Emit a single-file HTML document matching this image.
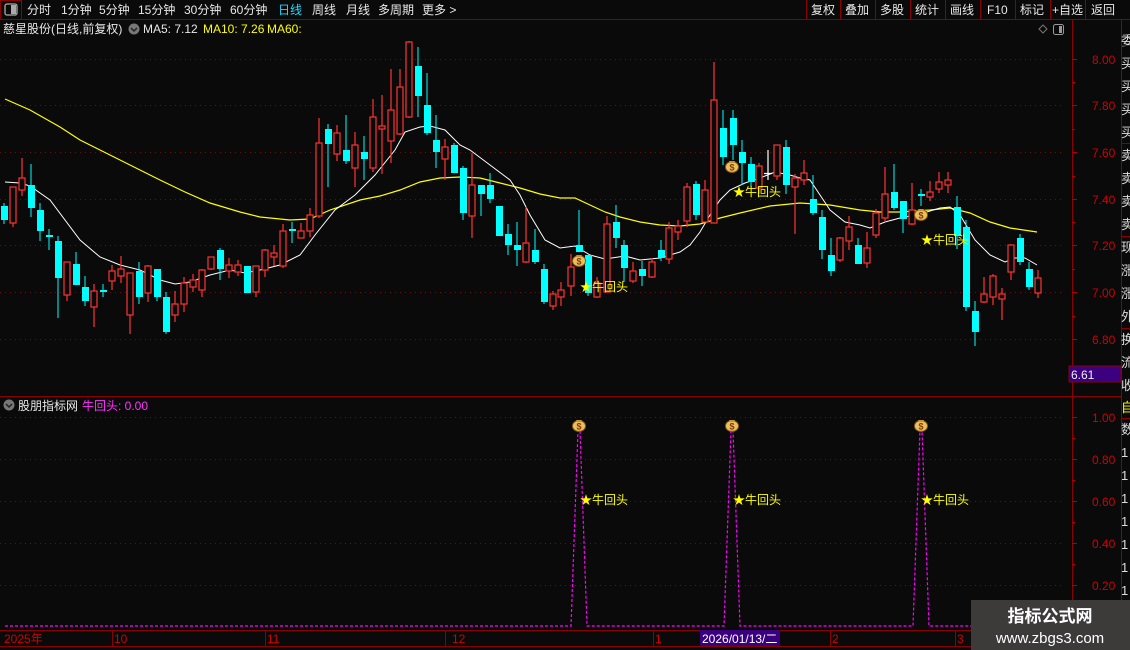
<!DOCTYPE html>
<html><head><meta charset="utf-8"><style>
html,body{margin:0;padding:0;background:#0a0a0a;width:1130px;height:650px;overflow:hidden}
svg{display:block;font-family:"Liberation Sans","Noto Sans CJK SC",sans-serif}
</style></head><body>
<svg width="1130" height="650" viewBox="0 0 1130 650" xmlns="http://www.w3.org/2000/svg">
<rect width="1130" height="650" fill="#0a0a0a"/>
<!-- toolbar -->
<g font-size="12" fill="#e8e8e8">
<rect x="0.5" y="0.5" width="21" height="19" fill="none" stroke="#8b0000"/>
<rect x="5" y="4" width="12" height="11" rx="2" fill="none" stroke="#aaa" stroke-width="1.3"/><rect x="11" y="5" width="5" height="9" fill="#aaa"/>
<text x="27" y="14">分时</text><text x="61" y="14">1分钟</text><text x="99" y="14">5分钟</text><text x="138" y="14">15分钟</text><text x="184" y="14">30分钟</text><text x="230" y="14">60分钟</text>
<text x="278" y="14" fill="#22d8ff">日线</text><text x="312" y="14">周线</text><text x="346" y="14">月线</text><text x="378" y="14">多周期</text><text x="422" y="14">更多 &gt;</text>
<line x1="0" y1="19.5" x2="1130" y2="19.5" stroke="#8b0000"/>
<g stroke="#8b0000"><line x1="806.5" y1="0" x2="806.5" y2="19"/><line x1="840.5" y1="0" x2="840.5" y2="19"/><line x1="875.5" y1="0" x2="875.5" y2="19"/><line x1="910.5" y1="0" x2="910.5" y2="19"/><line x1="945.5" y1="0" x2="945.5" y2="19"/><line x1="980.5" y1="0" x2="980.5" y2="19"/><line x1="1015.5" y1="0" x2="1015.5" y2="19"/><line x1="1050.5" y1="0" x2="1050.5" y2="19"/><line x1="1085.5" y1="0" x2="1085.5" y2="19"/></g>
<text x="811" y="14">复权</text><text x="845" y="14">叠加</text><text x="880" y="14">多股</text><text x="915" y="14">统计</text><text x="950" y="14">画线</text><text x="987" y="14">F10</text><text x="1020" y="14">标记</text><text x="1052" y="14">+自选</text><text x="1091" y="14">返回</text>
</g>
<!-- legend -->
<g font-size="12">
<text x="3" y="33" fill="#e8e8e8">慈星股份(日线,前复权)</text>
<circle cx="134" cy="29" r="5.5" fill="#777"/><path d="M131 28l3 3 3-3" stroke="#222" stroke-width="1.5" fill="none"/>
<text x="143" y="33" fill="#e8e8e8">MA5: 7.12</text>
<text x="203" y="33" fill="#ffff00">MA10: 7.26</text>
<text x="267" y="33" fill="#ffff00">MA60:</text>
<path d="M1043 25l4 4-4 4-4-4z" fill="none" stroke="#777"/>
<rect x="1053.5" y="24.5" width="10" height="10" rx="2" fill="none" stroke="#999"/><rect x="1059" y="26" width="3" height="7" fill="#999"/>
</g>
<!-- axes frame -->
<g stroke="#8b0000">
<line x1="1072.5" y1="20" x2="1072.5" y2="630"/>
<line x1="1121.5" y1="20" x2="1121.5" y2="650"/>
<line x1="0" y1="396.5" x2="1121" y2="396.5"/>
<line x1="0" y1="630.5" x2="1121" y2="630.5"/>
<line x1="0" y1="646.5" x2="1121" y2="646.5"/>
</g>
<!-- grid -->
<g stroke="#6a1010" stroke-dasharray="1 4">
<line x1="0" y1="59.5" x2="1063" y2="59.5"/><line x1="0" y1="105.5" x2="1063" y2="105.5"/><line x1="0" y1="152.5" x2="1063" y2="152.5"/><line x1="0" y1="199.5" x2="1063" y2="199.5"/><line x1="0" y1="245.5" x2="1063" y2="245.5"/><line x1="0" y1="292.5" x2="1063" y2="292.5"/><line x1="0" y1="339.5" x2="1063" y2="339.5"/>
<line x1="0" y1="417.5" x2="1063" y2="417.5"/><line x1="0" y1="459.5" x2="1063" y2="459.5"/><line x1="0" y1="501.5" x2="1063" y2="501.5"/><line x1="0" y1="543.5" x2="1063" y2="543.5"/><line x1="0" y1="585.5" x2="1063" y2="585.5"/>
</g>
<!-- right axis -->
<g stroke="#b00000">
<line x1="1072" y1="59.5" x2="1077" y2="59.5"/><line x1="1072" y1="82.5" x2="1075" y2="82.5"/><line x1="1072" y1="105.5" x2="1077" y2="105.5"/><line x1="1072" y1="129.5" x2="1075" y2="129.5"/><line x1="1072" y1="152.5" x2="1077" y2="152.5"/><line x1="1072" y1="176.5" x2="1075" y2="176.5"/><line x1="1072" y1="199.5" x2="1077" y2="199.5"/><line x1="1072" y1="222.5" x2="1075" y2="222.5"/><line x1="1072" y1="245.5" x2="1077" y2="245.5"/><line x1="1072" y1="269.5" x2="1075" y2="269.5"/><line x1="1072" y1="292.5" x2="1077" y2="292.5"/><line x1="1072" y1="316.5" x2="1075" y2="316.5"/><line x1="1072" y1="339.5" x2="1077" y2="339.5"/>
<line x1="1072" y1="417.5" x2="1077" y2="417.5"/><line x1="1072" y1="438.5" x2="1075" y2="438.5"/><line x1="1072" y1="459.5" x2="1077" y2="459.5"/><line x1="1072" y1="480.5" x2="1075" y2="480.5"/><line x1="1072" y1="501.5" x2="1077" y2="501.5"/><line x1="1072" y1="522.5" x2="1075" y2="522.5"/><line x1="1072" y1="543.5" x2="1077" y2="543.5"/><line x1="1072" y1="564.5" x2="1075" y2="564.5"/><line x1="1072" y1="585.5" x2="1077" y2="585.5"/>
</g>
<g font-size="12" fill="#d00000">
<text x="1092" y="64">8.00</text><text x="1092" y="110">7.80</text><text x="1092" y="157">7.60</text><text x="1092" y="204">7.40</text><text x="1092" y="250">7.20</text><text x="1092" y="297">7.00</text><text x="1092" y="344">6.80</text>
<text x="1092" y="422">1.00</text><text x="1092" y="464">0.80</text><text x="1092" y="506">0.60</text><text x="1092" y="548">0.40</text><text x="1092" y="590">0.20</text>
</g>
<rect x="1069" y="366" width="52" height="16" fill="#3a0080" stroke="#8b0000"/>
<text x="1071" y="379" font-size="12" fill="#eee">6.61</text>
<rect x="1069" y="380" width="52" height="16" fill="none"/>
<!-- right strip -->
<g font-size="13" fill="#ddd">
<text x="1121" y="45">委</text><text x="1121" y="68">买</text><text x="1121" y="91">买</text><text x="1121" y="114">买</text><text x="1121" y="137">买</text><text x="1121" y="160">卖</text><text x="1121" y="183">卖</text><text x="1121" y="206">卖</text><text x="1121" y="229">卖</text><text x="1121" y="252">现</text><text x="1121" y="275">涨</text><text x="1121" y="298">涨</text><text x="1121" y="321">外</text><text x="1121" y="344">换</text><text x="1121" y="367">流</text><text x="1121" y="390">收</text>
<text x="1121" y="412" fill="#ffff00">自</text><text x="1121" y="434">数</text>
<text x="1121" y="457">1</text><text x="1121" y="480">1</text><text x="1121" y="503">1</text><text x="1121" y="526">1</text><text x="1121" y="549">1</text><text x="1121" y="572">1</text><text x="1121" y="595">1</text>
</g>
<g stroke="#8b0000"><line x1="1121" y1="45.5" x2="1130" y2="45.5"/><line x1="1121" y1="143.5" x2="1130" y2="143.5"/><line x1="1121" y1="236.5" x2="1130" y2="236.5"/><line x1="1121" y1="328.5" x2="1130" y2="328.5"/><line x1="1121" y1="418.5" x2="1130" y2="418.5"/></g>
<!-- MA lines -->
<polyline fill="none" stroke="#ffff00" stroke-width="1.2" points="5,99 30,110 60,127 80,140 100,150 130,165 160,180 185,192 210,203 240,212 260,217 290,220 310,219 330,210 360,200 380,196 400,190 420,182 440,178 460,177 480,178 500,183 520,188 540,194 560,198 575,198 590,205 605,212 620,217 640,222 660,225 680,226 700,224 720,218 740,213 770,206 800,203 830,205 860,210 880,212 900,212 930,210 950,208 970,213 990,222 1010,228 1037,232"/>
<polyline fill="none" stroke="#ffffff" stroke-width="1" points="5,182 20,183 30,186 50,200 80,240 100,257 120,265 140,270 160,280 175,284 190,282 210,275 230,270 245,273 260,270 280,265 300,255 315,235 335,210 355,195 375,175 395,150 405,132 420,127 430,126 445,130 460,145 470,150 490,165 510,180 520,195 530,215 545,240 560,248 575,246 590,255 605,259 625,256 640,260 660,258 680,252 690,245 700,232 710,215 720,200 730,190 745,183 760,178 775,172 790,175 800,178 810,180 820,195 830,210 845,222 860,225 870,228 885,222 900,218 920,214 940,208 950,207 960,215 975,240 990,255 1005,262 1015,258 1025,258 1037,265"/>
<!-- candles: cyan -->
<g fill="#00ffff" stroke="#00ffff" stroke-width="1">
<path d="M4 203V224M31 164V217M40 203V241M49 229V250M58 236V318M76 252V285M85 276V306M103 284V297M139 262V304M157 269V301M166 292V334M220 248V280M247 266V293M292 222V243M328 124V187M346 115V164M364 136V180M418 47V117M427 73V135M436 115V168M454 143V173M463 166V220M481 185V216M490 173V203M499 206V236M508 224V255M517 222V266M535 229V264M544 264V304M579 210V252M588 255V296M616 205V248M624 240V282M642 261V286M661 240V261M696 181V220M723 110V165M733 110V160M742 140V185M751 157V187M786 140V194M813 175V215M822 210V259M831 238V276M858 238V264M894 164V210M903 201V233M921 189V206M957 196V249M966 220V311M975 301V346M1020 234V265M1029 262V290"/>
</g>
<g fill="#00ffff">
<rect x="1" y="206" width="7" height="14"/><rect x="28" y="185" width="7" height="23"/><rect x="37" y="210" width="7" height="21"/><rect x="46" y="235" width="7" height="2"/><rect x="55" y="241" width="7" height="37"/><rect x="73" y="264" width="7" height="21"/><rect x="82" y="287" width="7" height="14"/><rect x="100" y="290" width="7" height="2"/><rect x="136" y="271" width="7" height="26"/><rect x="154" y="269" width="7" height="28"/><rect x="163" y="297" width="7" height="35"/><rect x="217" y="250" width="7" height="19"/><rect x="244" y="266" width="7" height="27"/><rect x="289" y="229" width="7" height="2"/><rect x="325" y="129" width="7" height="15"/><rect x="343" y="150" width="7" height="11"/><rect x="361" y="152" width="7" height="7"/><rect x="415" y="66" width="7" height="30"/><rect x="424" y="105" width="7" height="28"/><rect x="433" y="140" width="7" height="12"/><rect x="451" y="145" width="7" height="28"/><rect x="460" y="168" width="7" height="45"/><rect x="478" y="185" width="7" height="9"/><rect x="487" y="185" width="7" height="14"/><rect x="496" y="206" width="7" height="30"/><rect x="505" y="234" width="7" height="11"/><rect x="514" y="245" width="7" height="5"/><rect x="532" y="250" width="7" height="12"/><rect x="541" y="269" width="7" height="33"/><rect x="576" y="245" width="7" height="7"/><rect x="585" y="255" width="7" height="38"/><rect x="613" y="222" width="7" height="16"/><rect x="621" y="245" width="7" height="23"/><rect x="639" y="269" width="7" height="7"/><rect x="658" y="250" width="7" height="8"/><rect x="693" y="184" width="7" height="31"/><rect x="720" y="128" width="7" height="29"/><rect x="730" y="118" width="7" height="27"/><rect x="739" y="152" width="7" height="11"/><rect x="748" y="164" width="7" height="18"/><rect x="783" y="147" width="7" height="38"/><rect x="810" y="199" width="7" height="14"/><rect x="819" y="217" width="7" height="33"/><rect x="828" y="255" width="7" height="16"/><rect x="855" y="245" width="7" height="19"/><rect x="891" y="192" width="7" height="16"/><rect x="900" y="201" width="7" height="18"/><rect x="918" y="194" width="7" height="2"/><rect x="954" y="207" width="7" height="29"/><rect x="963" y="227" width="7" height="80"/><rect x="972" y="311" width="7" height="21"/><rect x="1017" y="238" width="7" height="24"/><rect x="1026" y="269" width="7" height="18"/>
</g>
<!-- white doji -->
<path d="M768 150V180M764 173.5H772" stroke="#fff" stroke-width="1.2"/>
<!-- red candles -->
<g stroke="#ff3333" stroke-width="1.2">
<path d="M13 187V227M22 158V196M67 262V301M94 284V327M112 265V290M121 256V283M130 273V334M148 265V302M175 291V322M184 277V312M193 274V292M202 269V297M211 257V270M229 258V278M238 260V276M256 266V297M265 249V277M274 245V266M283 224V268M301 223V238M310 208V237M319 118V218M337 125V161M355 132V187M373 99V172M382 95V174M391 69V163M400 69V135M409 41V118M445 139V180M472 153V238M526 207V263M553 291V310M561 282V306M571 254V296M597 277V298M607 216V292M633 262V283M652 258V278M669 222V264M678 220V240M687 183V227M705 180V222M714 62V223M759 163V194M777 145V180M795 174V234M804 160V185M840 237V262M849 216V250M867 232V268M876 209V238M885 167V222M912 183V225M930 181V201M939 172V193M948 172V193M984 277V303M993 274V305M1002 288V320M1011 244V280M1038 270V298"/>
</g>
<g fill="#0a0a0a" stroke="#ff3333" stroke-width="1.2">
<rect x="10" y="187" width="6" height="36"/><rect x="19" y="178" width="6" height="12"/><rect x="64" y="262" width="6" height="33"/><rect x="91" y="291" width="6" height="16"/><rect x="109" y="271" width="6" height="10"/><rect x="118" y="269" width="6" height="7"/><rect x="127" y="273" width="6" height="42"/><rect x="145" y="266" width="6" height="27"/><rect x="172" y="304" width="6" height="11"/><rect x="181" y="283" width="6" height="21"/><rect x="190" y="280" width="6" height="7"/><rect x="199" y="270" width="6" height="20"/><rect x="208" y="257" width="6" height="12"/><rect x="226" y="265" width="6" height="6"/><rect x="235" y="265" width="6" height="7"/><rect x="253" y="266" width="6" height="26"/><rect x="262" y="250" width="6" height="20"/><rect x="271" y="253" width="6" height="4"/><rect x="280" y="231" width="6" height="35"/><rect x="298" y="231" width="6" height="7"/><rect x="307" y="215" width="6" height="16"/><rect x="316" y="143" width="6" height="73"/><rect x="334" y="133" width="6" height="21"/><rect x="352" y="145" width="6" height="23"/><rect x="370" y="117" width="6" height="51"/><rect x="379" y="126" width="6" height="3"/><rect x="388" y="110" width="6" height="31"/><rect x="397" y="87" width="6" height="47"/><rect x="406" y="42" width="6" height="75"/><rect x="442" y="147" width="6" height="12"/><rect x="469" y="185" width="6" height="31"/><rect x="523" y="243" width="6" height="19"/><rect x="550" y="294" width="6" height="12"/><rect x="558" y="290" width="6" height="7"/><rect x="568" y="267" width="6" height="19"/><rect x="594" y="283" width="6" height="14"/><rect x="604" y="224" width="6" height="68"/><rect x="630" y="271" width="6" height="10"/><rect x="649" y="262" width="6" height="15"/><rect x="666" y="228" width="6" height="31"/><rect x="675" y="226" width="6" height="6"/><rect x="684" y="187" width="6" height="34"/><rect x="702" y="190" width="6" height="32"/><rect x="711" y="100" width="6" height="123"/><rect x="756" y="166" width="6" height="22"/><rect x="774" y="145" width="6" height="31"/><rect x="792" y="178" width="6" height="9"/><rect x="801" y="173" width="6" height="7"/><rect x="837" y="238" width="6" height="22"/><rect x="846" y="227" width="6" height="14"/><rect x="864" y="248" width="6" height="15"/><rect x="873" y="213" width="6" height="22"/><rect x="882" y="194" width="6" height="24"/><rect x="909" y="210" width="6" height="14"/><rect x="927" y="192" width="6" height="5"/><rect x="936" y="182" width="6" height="7"/><rect x="945" y="180" width="6" height="5"/><rect x="981" y="294" width="6" height="8"/><rect x="990" y="276" width="6" height="21"/><rect x="999" y="294" width="6" height="5"/><rect x="1008" y="245" width="6" height="27"/><rect x="1035" y="278" width="6" height="15"/>
</g>
<!-- signal markers -->
<defs>
<g id="bag"><ellipse cx="0" cy="2" rx="6.5" ry="5.5" fill="#e8c060" stroke="#8a5a10"/><path d="M-3-4h6l-1.5 2h-3z" fill="#c89030"/><text x="0" y="5.5" font-size="9" text-anchor="middle" fill="#8a3a00" font-weight="bold">$</text></g>
<g id="sig"><text x="0" y="0" font-size="12" fill="#ffff00">★牛回头</text></g>
</defs>
<use href="#bag" x="579" y="259"/><use href="#bag" x="732" y="165"/><use href="#bag" x="921" y="213"/>
<use href="#sig" x="580" y="291"/><use href="#sig" x="733" y="196"/><use href="#sig" x="921" y="244"/>
<!-- lower panel -->
<g font-size="12">
<circle cx="9" cy="405" r="5.5" fill="#777"/><path d="M6 404l3 3 3-3" stroke="#222" stroke-width="1.5" fill="none"/>
<text x="18" y="410" fill="#e8e8e8">股朋指标网</text>
<text x="82" y="410" fill="#ff33ff">牛回头: 0.00</text>
</g>
<polyline fill="none" stroke="#ff00ff" stroke-width="1.2" stroke-dasharray="3 2" points="5,626 571,626 578,430 580,430 587,626 724,626 731,430 733,430 740,626 913,626 920,430 922,430 929,626 1063,626"/>
<use href="#bag" x="579" y="424"/><use href="#bag" x="732" y="424"/><use href="#bag" x="921" y="424"/>
<use href="#sig" x="580" y="504"/><use href="#sig" x="733" y="504"/><use href="#sig" x="921" y="504"/>
<!-- time axis -->
<g stroke="#8b0000"><line x1="112.5" y1="630" x2="112.5" y2="646"/><line x1="265.5" y1="630" x2="265.5" y2="646"/><line x1="445.5" y1="630" x2="445.5" y2="646"/><line x1="653.5" y1="630" x2="653.5" y2="646"/><line x1="830.5" y1="630" x2="830.5" y2="646"/><line x1="955.5" y1="630" x2="955.5" y2="646"/></g>
<g font-size="12" fill="#d00000">
<text x="4" y="643">2025年</text><text x="114" y="643">10</text><text x="267" y="643">11</text><text x="452" y="643">12</text><text x="655" y="643">1</text><text x="832" y="643">2</text><text x="957" y="643">3</text>
</g>
<rect x="700" y="630" width="80" height="16" fill="#3a0080"/>
<text x="702" y="643" font-size="12" fill="#fff">2026/01/13/二</text>
<!-- watermark -->
<rect x="971" y="600" width="159" height="50" fill="#3d3a3a"/>
<text x="1050" y="622" font-size="17" font-weight="bold" fill="#fff" text-anchor="middle">指标公式网</text>
<text x="1050" y="643" font-size="15" fill="#fff" text-anchor="middle">www.zbgs3.com</text>
</svg>
</body></html>
